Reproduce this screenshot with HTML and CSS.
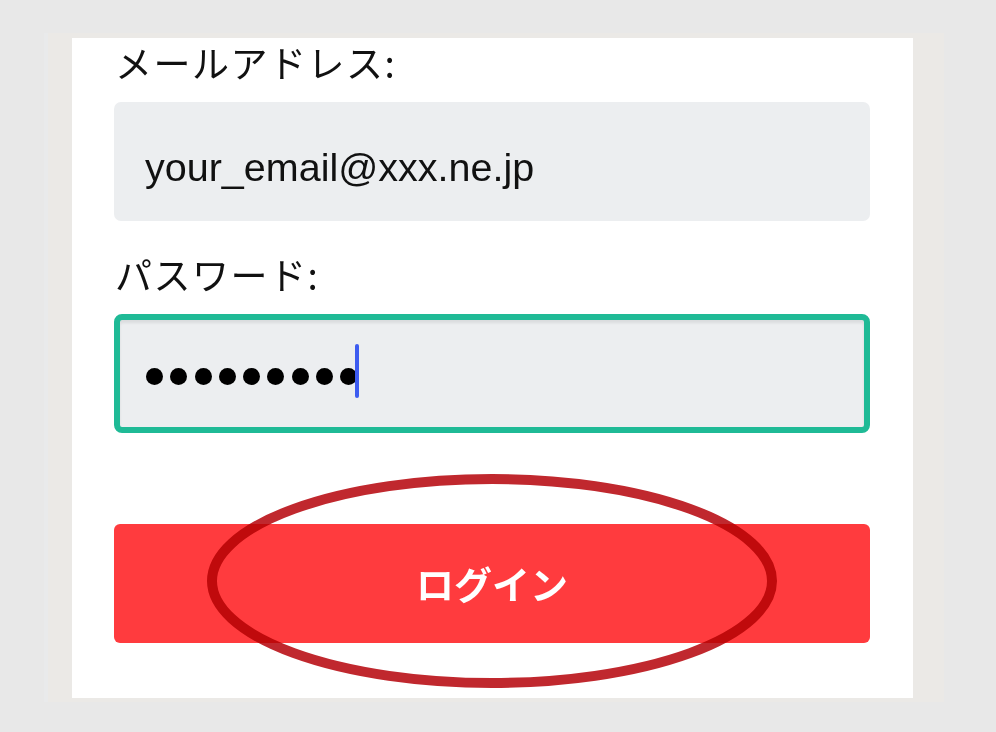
FILE: index.html
```html
<!DOCTYPE html>
<html lang="ja">
<head>
<meta charset="utf-8">
<title>ログイン</title>
<link rel="stylesheet" href="styles.css">
</head>
<body>
<div class="frame">
  <div class="card">
    <div class="label">メールアドレス:</div>
    <div class="input email">your_email@xxx.ne.jp</div>
    <div class="label">パスワード:</div>
    <div class="input password">
      <div class="dots">
        <span class="dot"></span><span class="dot"></span><span class="dot"></span>
        <span class="dot"></span><span class="dot"></span><span class="dot"></span>
        <span class="dot"></span><span class="dot"></span><span class="dot"></span>
      </div>
      <span class="caret"></span>
    </div>
    <div class="button">ログイン</div>
    <svg class="mark" width="841" height="660" viewBox="0 0 841 660" aria-hidden="true">
      <ellipse cx="420" cy="543" rx="280" ry="102" fill="none" stroke="#c0282e" stroke-width="10"/>
    </svg>
  </div>
</div>
</body>
</html>
```
FILE: styles.css
```css
html, body {
  margin: 0;
  padding: 0;
}
body {
  background: #e8e8e8;
  width: 996px;
  height: 732px;
  overflow: hidden;
  padding: 33px 0 0 44px;
  box-sizing: border-box;
}
.frame {
  width: 900px;
  height: 669px;
  box-sizing: border-box;
  padding: 5px 31px 4px 28px;
  background: #ebe9e6;
  border-left: 4px solid #e9eaeb;
}
.card {
  position: relative;
  width: 841px;
  height: 660px;
  margin-left: -4px;
  box-sizing: border-box;
  background: #ffffff;
  padding: 0 43px 0 42px;
  display: flex;
  flex-direction: column;
}
.label {
  font-family: "Noto Sans CJK JP", sans-serif;
  font-size: 37px;
  letter-spacing: 1.5px;
  line-height: 48px;
  height: 48px;
  color: #111111;
  margin-bottom: 16px;
  padding-left: 1px;
}
.input {
  height: 119px;
  box-sizing: border-box;
  background: #eceef0;
  border-radius: 7px;
  flex-shrink: 0;
}
.email {
  font-family: "Liberation Sans", Arial, sans-serif;
  font-size: 39.5px;
  color: #111111;
  padding: 11px 0 0 31px;
  line-height: 108px;
  margin-bottom: 29px;
  white-space: nowrap;
}
.password {
  border: 6px solid #1fba96;
  border-radius: 8px;
  box-shadow: inset 0 3px 3px rgba(0, 0, 0, 0.08);
  display: flex;
  align-items: flex-start;
  padding-left: 26px;
}
.dots {
  display: flex;
  gap: 7.25px;
  margin-top: 48px;
}
.dot {
  width: 17px;
  height: 17px;
  border-radius: 50%;
  background: #000000;
}
.caret {
  width: 4px;
  height: 54px;
  border-radius: 2px;
  background: #3d5cf0;
  margin-top: 24px;
  margin-left: -2px;
}
.button {
  margin-top: 91px;
  height: 119px;
  flex-shrink: 0;
  background: #ff3b3e;
  border-radius: 6px;
  color: #ffffff;
  font-family: "Noto Sans CJK JP", sans-serif;
  font-weight: 700;
  font-size: 38px;
  padding-bottom: 3px;
  box-sizing: border-box;
  display: flex;
  align-items: center;
  justify-content: center;
}
.mark {
  position: absolute;
  left: 0;
  top: 0;
  pointer-events: none;
  mix-blend-mode: multiply;
}
```
